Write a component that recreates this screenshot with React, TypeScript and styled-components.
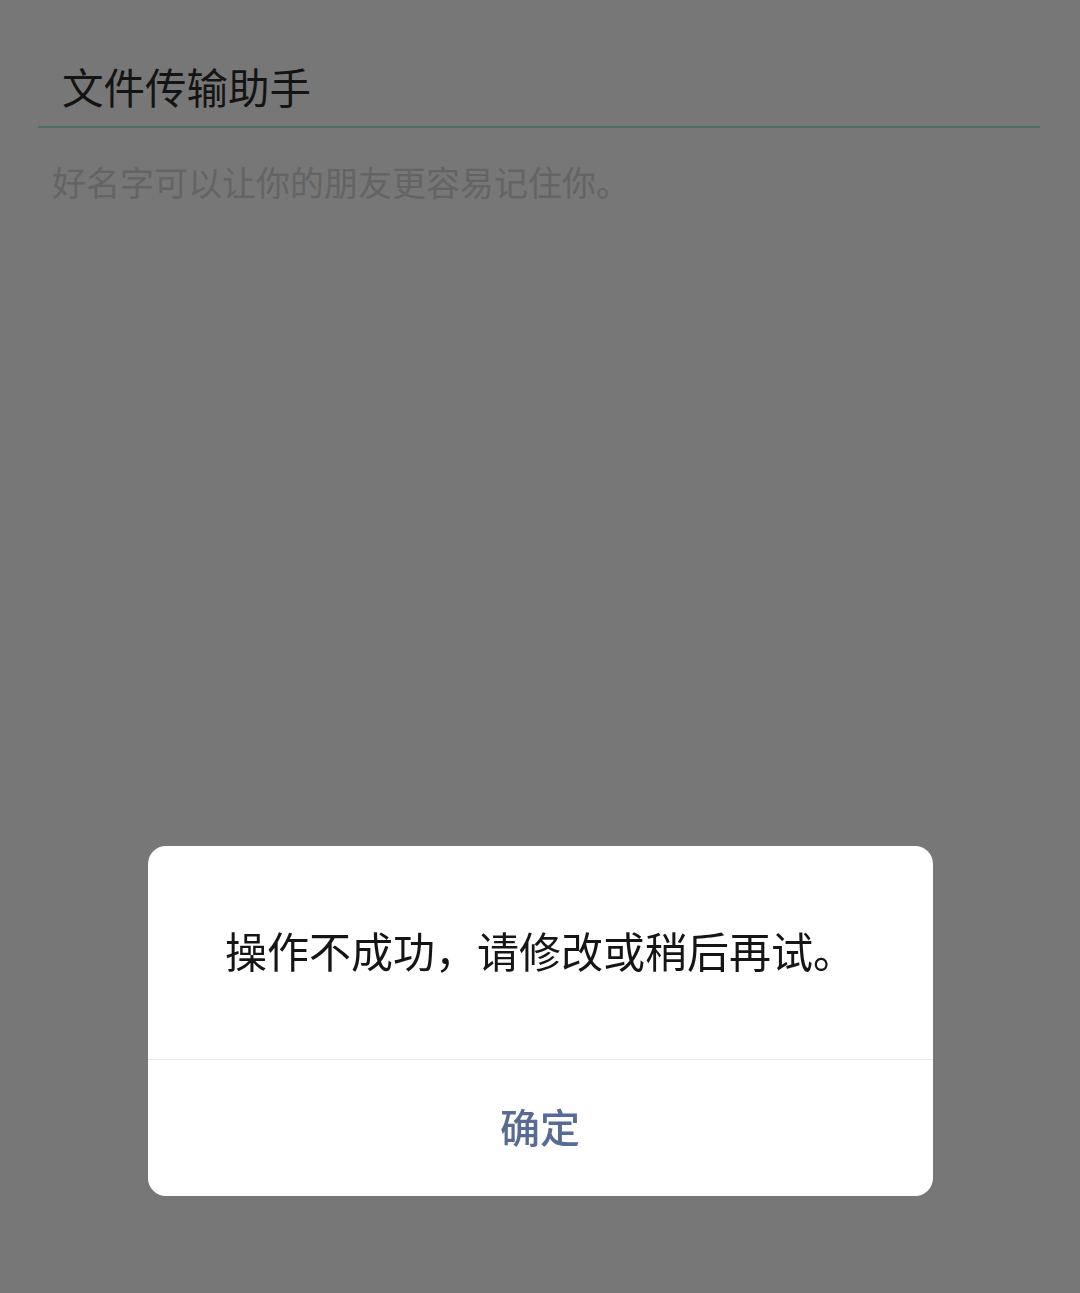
import React from "react";
import styled, { createGlobalStyle } from "styled-components";

const GlobalStyle = createGlobalStyle`
  html, body {
    margin: 0;
    padding: 0;
    background: #777777;
  }
  body {
    font-family: "Noto Sans CJK SC", "Noto Sans", sans-serif;
  }
`;

const Page = styled.div`
  width: 1080px;
  height: 1293px;
  background: #777777;
  overflow: hidden;
`;

const Field = styled.div`
  margin: 0 40px 0 38px;
  padding-top: 46px;
`;

const NameInput = styled.div`
  padding: 0 0 0 24px;
  height: 80px;
  display: flex;
  align-items: center;
  font-size: 41.5px;
  color: #141414;
  border-bottom: 2px solid #4f6e63;
`;

const Hint = styled.p`
  margin: 30px 0 0 14px;
  font-size: 34px;
  line-height: 48px;
  color: #646464;
`;

const Overlay = styled.div`
  position: fixed;
  inset: 0;
  display: flex;
  align-items: flex-end;
  justify-content: center;
  padding-bottom: 97px;
`;

const Dialog = styled.div`
  width: 785px;
  background: #ffffff;
  border-radius: 18px;
  overflow: hidden;
  display: flex;
  flex-direction: column;
`;

const Message = styled.div`
  height: 214px;
  box-sizing: border-box;
  padding-bottom: 6px;
  display: flex;
  align-items: center;
  justify-content: center;
  font-size: 42px;
  color: #151515;
  border-bottom: 1px solid #e6e6e6;
`;

const ActionButton = styled.button`
  height: 136px;
  padding: 0 0 4px;
  border: none;
  background: transparent;
  font-family: inherit;
  font-size: 40px;
  font-weight: 500;
  color: #576b95;
  cursor: pointer;
`;

export default function App() {
  return (
    <Page>
      <GlobalStyle />
      <Field>
        <NameInput>文件传输助手</NameInput>
        <Hint>好名字可以让你的朋友更容易记住你。</Hint>
      </Field>
      <Overlay>
        <Dialog>
          <Message>操作不成功，请修改或稍后再试。</Message>
          <ActionButton>确定</ActionButton>
        </Dialog>
      </Overlay>
    </Page>
  );
}
